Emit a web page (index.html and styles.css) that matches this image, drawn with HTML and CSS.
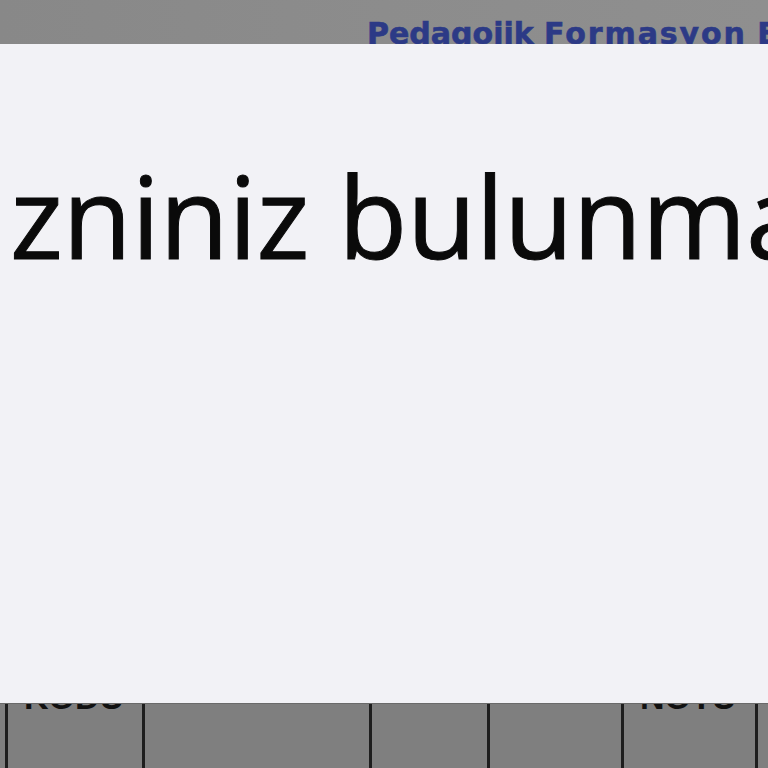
FILE: index.html
```html
<!DOCTYPE html>
<html>
<head>
<meta charset="utf-8">
<link rel="stylesheet" href="styles.css">
</head>
<body>
<div class="page">
  <header class="topbar"><span class="title">Pedagojik <span class="wide">Formasyon</span> Eğitimi</span></header>
  <div class="sheet">
    <div class="cell"><span class="head">KODU</span></div>
    <div class="cell"></div>
    <div class="cell"></div>
    <div class="cell"></div>
    <div class="cell"><span class="head">NOTU</span></div>
    <div class="cell"></div>
  </div>
</div>
<div class="modal">
  <p class="message">zniniz bulunmamaktadır</p>
</div>
</body>
</html>
```
FILE: styles.css
```css
html, body {
  margin: 0;
  padding: 0;
  width: 768px;
  height: 768px;
  overflow: hidden;
  background: #7f7f7f;
  font-family: "Open Sans", "Noto Sans", sans-serif;
}
.page {
  display: flex;
  flex-direction: column;
  height: 768px;
}
.topbar {
  height: 44px;
  flex: none;
  background: linear-gradient(90deg, #888888 0%, #8c8c8c 50%, #8f8f8f 100%);
  padding-left: 367px;
  overflow: hidden;
  white-space: nowrap;
  box-sizing: border-box;
}
.title {
  display: block;
  font-family: "DejaVu Sans", Verdana, sans-serif;
  font-weight: 700;
  font-size: 30px;
  line-height: 1;
  padding-top: 19px;
  color: #2c3a86;
  -webkit-text-stroke: 0.6px #2c3a86;
}
.wide {
  letter-spacing: 1.9px;
}
.sheet {
  margin-top: 560px;
  margin-left: 5px;
  display: grid;
  grid-template-columns: 137px 227px 118px 134px 134px 1fr;
  flex: 1;
}
.cell {
  border-left: 3px solid #1e1e1e;
  padding-left: 16px;
  padding-top: 76px;
}
.head {
  font-family: "Liberation Sans", Arial, sans-serif;
  font-weight: 700;
  font-size: 34px;
  line-height: 1;
  color: #111;
}
.modal {
  position: absolute;
  left: 0;
  top: 44px;
  width: 768px;
  height: 659px;
  background: #f2f2f6;
  overflow: hidden;
  box-shadow: 0 1px 0 #6a6a6a;
}
.message {
  margin: 0;
  padding: 115px 0 0 10px;
  white-space: nowrap;
  font-family: "Open Sans", "Noto Sans", sans-serif;
  font-size: 113px;
  line-height: 1;
  letter-spacing: -0.4px;
  color: #0a0a0a;
  -webkit-text-stroke: 1px #0a0a0a;
}
```
